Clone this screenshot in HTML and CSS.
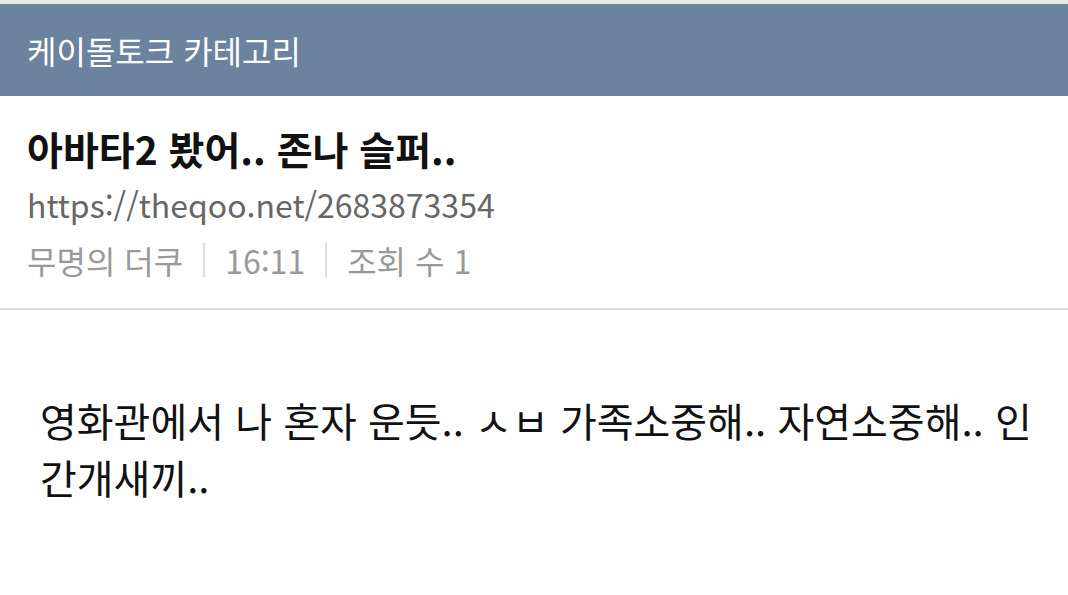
FILE: index.html
```html
<!DOCTYPE html>
<html lang="ko">
<head>
<meta charset="utf-8">
<link rel="stylesheet" href="styles.css">
</head>
<body>
<div class="topstrip"></div>
<header class="catbar">케이돌토크 카테고리</header>
<section class="post-head">
  <h1 class="title">아바타2 봤어.. 존나 슬퍼..</h1>
  <div class="url">https://theqoo.net/2683873354</div>
  <div class="meta">
    <span>무명의 더쿠</span>
    <span class="sep"></span>
    <span>16:11</span>
    <span class="sep"></span>
    <span>조회 수 1</span>
  </div>
</section>
<article class="post-body">영화관에서 나 혼자 운듯.. ㅅㅂ 가족소중해.. 자연소중해.. 인간개새끼..</article>
</body>
</html>
```
FILE: styles.css
```css
html, body {
  margin: 0;
  padding: 0;
  background: #fff;
  font-family: "Noto Sans CJK KR", "Noto Sans", sans-serif;
}
.topstrip {
  height: 4px;
  background: #e6e6e6;
}
.catbar {
  background: #6b839e;
  color: #fff;
  height: 92px;
  display: flex;
  align-items: center;
  padding-left: 27px;
  font-size: 32px;
}
.post-head {
  padding: 24px 27px 0;
  border-bottom: 2px solid #dcdcdc;
  box-sizing: border-box;
  height: 214px;
}
.title {
  margin: 0;
  font-size: 39px;
  font-weight: 700;
  color: #111;
  line-height: 56px;
}
.url {
  font-size: 32px;
  color: #666;
  line-height: 56px;
}
.meta {
  display: flex;
  align-items: center;
  font-size: 32px;
  color: #999;
  line-height: 56px;
}
.sep {
  width: 2px;
  height: 34px;
  background: #ddd;
  margin: 0 20px;
}
.post-body {
  padding: 82px 20px 0 40px;
  font-size: 40px;
  line-height: 57px;
  color: #111;
}
```
